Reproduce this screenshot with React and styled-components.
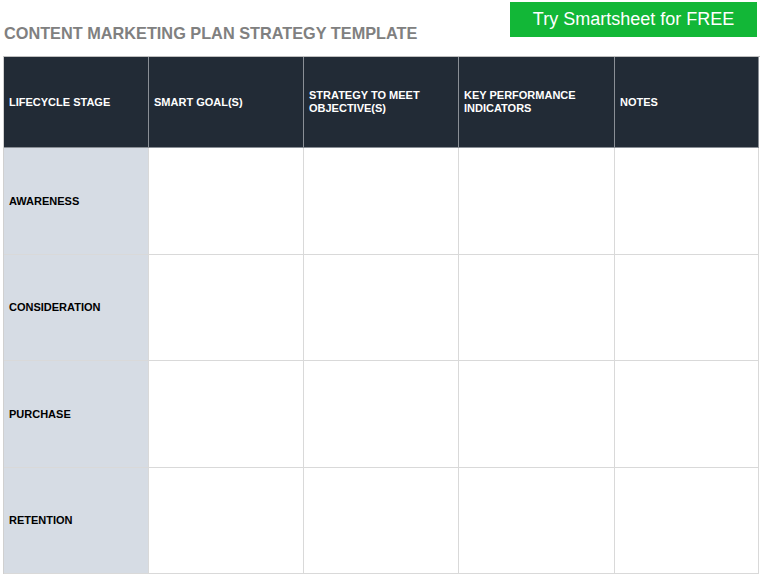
import React from "react";
import styled, { createGlobalStyle } from "styled-components";

const Global = createGlobalStyle`
  html, body { margin: 0; padding: 0; background: #fff; }
  body { font-family: "Liberation Sans", Arial, sans-serif; }
`;

const Page = styled.div`
  width: 760px;
  height: 577px;
  padding: 2px 2px 0 3px;
  box-sizing: border-box;
`;

const Top = styled.div`
  display: flex;
  justify-content: space-between;
  align-items: flex-start;
  height: 54px;
`;

const Title = styled.h1`
  margin: 22px 0 0 1px;
  font-size: 16.3px;
  font-weight: bold;
  color: #808080;
`;

const Cta = styled.div`
  width: 247px;
  height: 35px;
  background: #12b737;
  color: #fff;
  font-size: 18px;
  display: flex;
  align-items: center;
  justify-content: center;
  margin-right: 1px;
`;

const Grid = styled.div`
  display: grid;
  grid-template-columns: 145px 155px 155px 156px 144px;
  grid-template-rows: 91px repeat(4, 106.5px);
  border-left: 1px solid #d0d0d0;
  border-top: 1px solid #bfbfbf;
  width: 756px;
`;

const Head = styled.div`
  background: #222b36;
  color: #fff;
  font-size: 11px;
  font-weight: bold;
  line-height: 13px;
  display: flex;
  align-items: center;
  padding: 0 10px 0 5px;
  border-right: 1px solid #8a8f96;
  border-bottom: 1px solid #8a8f96;
`;

const Cell = styled.div`
  background: ${p => (p.$label ? "#d6dce4" : "#fff")};
  border-right: 1px solid #d9d9d9;
  border-bottom: 1px solid #d9d9d9;
  font-size: 11px;
  font-weight: bold;
  color: #000;
  display: flex;
  align-items: center;
  padding-left: 5px;
`;

const heads = ["LIFECYCLE STAGE", "SMART GOAL(S)", "STRATEGY TO MEET OBJECTIVE(S)", "KEY PERFORMANCE INDICATORS", "NOTES"];
const rows = ["AWARENESS", "CONSIDERATION", "PURCHASE", "RETENTION"];

export default function App() {
  return (
    <>
      <Global />
      <Page>
        <Top>
          <Title>CONTENT MARKETING PLAN STRATEGY TEMPLATE</Title>
          <Cta>Try Smartsheet for FREE</Cta>
        </Top>
        <Grid>
          {heads.map(h => <Head key={h}>{h}</Head>)}
          {rows.map(r => (
            <React.Fragment key={r}>
              <Cell $label>{r}</Cell>
              <Cell /><Cell /><Cell /><Cell />
            </React.Fragment>
          ))}
        </Grid>
      </Page>
    </>
  );
}
